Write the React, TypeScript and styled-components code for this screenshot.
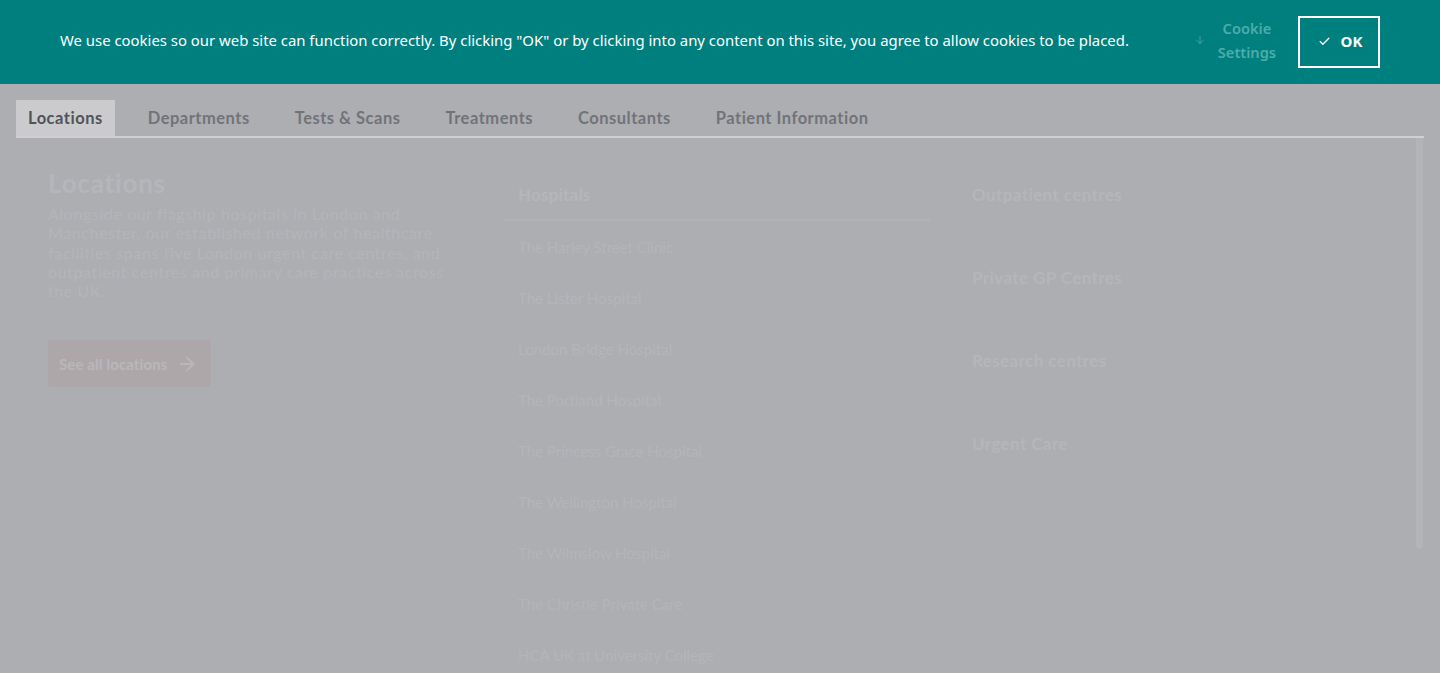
import React from "react";
import styled, { createGlobalStyle } from "styled-components";
import { ArrowDown, ArrowRight, Check } from "lucide-react";

const tabs = [
  "Locations",
  "Departments",
  "Tests & Scans",
  "Treatments",
  "Consultants",
  "Patient Information",
];

const hospitals = [
  "The Harley Street Clinic",
  "The Lister Hospital",
  "London Bridge Hospital",
  "The Portland Hospital",
  "The Princess Grace Hospital",
  "The Wellington Hospital",
  "The Wilmslow Hospital",
  "The Christie Private Care",
  "HCA UK at University College",
];

const others = [
  "Outpatient centres",
  "Private GP Centres",
  "Research centres",
  "Urgent Care",
];

const App = () => {
  return (
    <>
      <GlobalStyle />
      <Banner>
        <BannerText>
          We use cookies so our web site can function correctly. By clicking "OK" or by clicking into any
          content on this site, you agree to allow cookies to be placed.
        </BannerText>
        <BannerActions>
          <SettingsLink>
            <ArrowDown size={12} strokeWidth={1.6} />
            <span>Cookie<br />Settings</span>
          </SettingsLink>
          <OkButton>
            <Check size={13} strokeWidth={2.4} />
            OK
          </OkButton>
        </BannerActions>
      </Banner>

      <Main>
        <TabBar>
          {tabs.map((tab, idx) => (
            <Tab key={tab} active={idx === 0}>{tab}</Tab>
          ))}
        </TabBar>

        <Panel>
          <Columns>
            <Intro>
              <IntroTitle>Locations</IntroTitle>
              <IntroText>
                Alongside our flagship hospitals in London and Manchester, our established network of
                healthcare facilities spans five London urgent care centres, and outpatient centres and
                primary care practices across the UK.
              </IntroText>
              <SeeAll>
                See all locations
                <ArrowRight size={22} strokeWidth={2} />
              </SeeAll>
            </Intro>

            <HospitalList>
              <ListHeading>Hospitals</ListHeading>
              {hospitals.map((name) => (
                <HospitalItem key={name}>{name}</HospitalItem>
              ))}
            </HospitalList>

            <OtherList>
              {others.map((name) => (
                <OtherItem key={name}>{name}</OtherItem>
              ))}
            </OtherList>
          </Columns>
          <ScrollThumb />
        </Panel>
      </Main>
    </>
  );
};

const GlobalStyle = createGlobalStyle`
  html, body {
    margin: 0;
    padding: 0;
    background: #adaeb2;
    overflow: hidden;
  }
  body {
    font-family: Lato, "Noto Sans", sans-serif;
    min-height: 673px;
  }
`;

const Banner = styled.header`
  height: 84px;
  background: #007f7f;
  display: flex;
  align-items: center;
  justify-content: space-between;
  padding: 0 60px;
  box-sizing: border-box;
`;

const BannerText = styled.p`
  margin: 0 0 4px;
  color: #ffffff;
  font-family: "Noto Sans", sans-serif;
  font-size: 14.9px;
`;

const BannerActions = styled.div`
  display: flex;
  align-items: center;
  gap: 22px;
`;

const SettingsLink = styled.div`
  display: flex;
  align-items: center;
  gap: 12px;
  margin-bottom: 4px;
  color: #4cadaa;
  font-family: "Noto Sans", sans-serif;
  font-weight: 600;
  font-size: 14.6px;
  line-height: 24px;
  text-align: center;
`;

const OkButton = styled.button`
  width: 82px;
  height: 52px;
  border: 2px solid #ffffff;
  background: transparent;
  color: #ffffff;
  display: flex;
  align-items: center;
  justify-content: center;
  gap: 10px;
  font-family: "Noto Sans", sans-serif;
  font-weight: 700;
  font-size: 15px;
  padding: 0 0 2px 2px;
`;

const Main = styled.main`
  padding: 16px 16px 0;
`;

const TabBar = styled.nav`
  display: flex;
  gap: 21px;
  height: 36px;
  border-bottom: 2px solid #d0d0d2;
`;

const Tab = styled.div<{ active?: boolean }>`
  display: flex;
  align-items: center;
  padding: 0 12px;
  font-size: 16.5px;
  font-weight: 700;
  letter-spacing: 0.5px;
  color: ${(p) => (p.active ? "#50535a" : "#727379")};
  background: ${(p) => (p.active ? "#cbcbcd" : "transparent")};
`;

const Panel = styled.section`
  display: flex;
  align-items: flex-start;
`;

const Columns = styled.div`
  flex: 1;
  display: grid;
  grid-template-columns: 455px 427px 1fr;
  padding: 29px 0 0 32px;
`;

const Intro = styled.div`
  display: flex;
  flex-direction: column;
  align-items: flex-start;
  padding-right: 30px;
`;

const IntroTitle = styled.h2`
  margin: 0;
  font-size: 26px;
  line-height: 32px;
  font-weight: 700;
  letter-spacing: 0.8px;
  color: #b5b6ba;
`;

const IntroText = styled.p`
  margin: 5px 0 0;
  font-size: 16px;
  line-height: 19.3px;
  letter-spacing: 0.6px;
  color: #b4b5b9;
`;

const SeeAll = styled.div`
  margin-top: 40px;
  height: 47px;
  padding: 0 13px 0 11px;
  border-radius: 3px;
  background: #ada7aa;
  color: #b8b7bb;
  display: flex;
  align-items: center;
  gap: 9px;
  font-size: 15px;
  font-weight: 700;
  letter-spacing: 0.1px;
`;

const HospitalList = styled.div`
  display: flex;
  flex-direction: column;
`;

const ListHeading = styled.h3`
  margin: 0;
  padding: 16px 15px 12px;
  font-size: 17px;
  line-height: 24px;
  font-weight: 700;
  letter-spacing: 0.2px;
  color: #b5b6ba;
  border-bottom: 2px solid #b2b3b7;
`;

const HospitalItem = styled.div`
  height: 51px;
  display: flex;
  align-items: center;
  padding: 0 15px;
  font-size: 15px;
  color: #b4b5b9;
`;

const OtherList = styled.div`
  display: flex;
  flex-direction: column;
  padding-left: 26px;
`;

const OtherItem = styled.div`
  height: 83px;
  box-sizing: border-box;
  padding: 16px 16px 0;
  font-size: 17px;
  line-height: 24px;
  font-weight: 700;
  letter-spacing: 0.4px;
  color: #b5b6ba;
`;

const ScrollThumb = styled.div`
  width: 7px;
  height: 411px;
  margin-right: 1px;
  border-radius: 0 0 4px 4px;
  background: #b3b4b8;
`;

export default App;
